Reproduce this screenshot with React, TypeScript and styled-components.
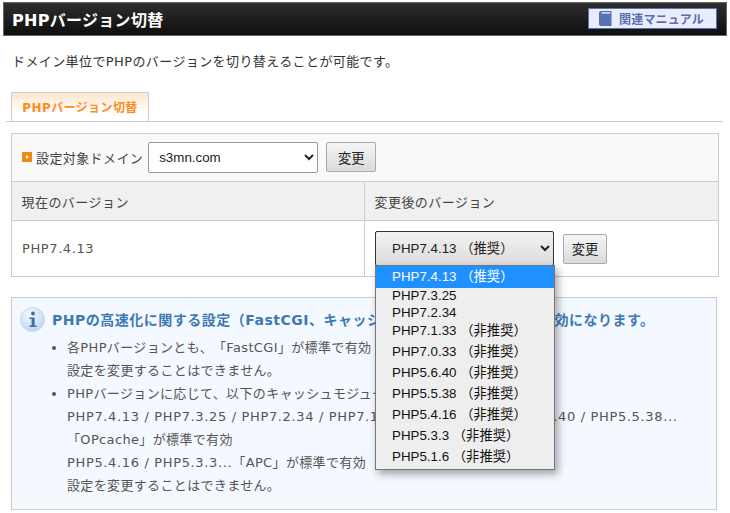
import * as React from 'react';
import styled, { createGlobalStyle } from 'styled-components';

const GlobalStyle = createGlobalStyle`
	html, body {
		margin: 0;
		padding: 0;
		background: #fff;
	}
	body {
		font-family: "DejaVu Sans", "Noto Sans CJK JP", sans-serif;
		font-size: 13px;
		color: #333;
		text-spacing-trim: space-all;
	}
`;

const CJK_UI = `"Liberation Sans", "Noto Sans CJK JP", sans-serif`;

const Page = styled.div`
	width: 730px;
	height: 513px;
	padding: 2px 3px 0;
	box-sizing: border-box;
	overflow: hidden;
`;

const Header = styled.header`
	display: flex;
	align-items: center;
	justify-content: space-between;
	height: 34px;
	box-sizing: border-box;
	padding: 0 9px 0 8px;
	border: 1px solid #666;
	background: linear-gradient(#2e2e2e, #0e0e0e);
`;

const Title = styled.h1`
	margin: 0;
	font-size: 16px;
	letter-spacing: 0.3px;
	font-weight: bold;
	color: #fff;
`;

const ManualLink = styled.a`
	display: flex;
	align-items: center;
	gap: 7px;
	width: 129px;
	height: 21px;
	box-sizing: border-box;
	padding-left: 10px;
	margin-bottom: 2px;
	background: #e9edfb;
	border: 1px solid #5a72b5;
	color: #5a6fae;
	font-size: 12px;
	letter-spacing: 0.2px;
	font-weight: bold;
`;

const Lead = styled.p`
	margin: 16px 0 0 9px;
	font-size: 13px;
	letter-spacing: 0.4px;
	line-height: 19px;
	color: #333;
`;

const TabBar = styled.div`
	margin: 21px 4px 0 3px;
	padding-left: 5px;
	border-bottom: 1px solid #ccc;
	height: 29px;
`;

const Tab = styled.div`
	width: 138px;
	height: 29px;
	box-sizing: border-box;
	padding-top: 1px;
	border: 1px solid #ccc;
	border-bottom: none;
	background: linear-gradient(#ffe6cc, #fff 70%);
	color: #ff8c1f;
	font-size: 12px;
	letter-spacing: 0.4px;
	font-weight: bold;
	line-height: 29px;
	text-align: center;
`;

const Table = styled.table`
	width: 708px;
	margin: 11px 0 0 8px;
	border-collapse: collapse;
	table-layout: fixed;

	td, th {
		border: 1px solid #ccc;
		padding: 0 10px;
		text-align: left;
		box-sizing: border-box;
	}
`;

const LeftColumn = styled.col`
	width: 353px;
`;

const DomainCell = styled.td`
	height: 48px;
	background: #f9f9f9;
`;

const DomainRow = styled.div`
	display: flex;
	align-items: center;
	gap: 8px;
	margin-top: -1px;
	font-size: 13px;
	color: #444;
`;

const DomainLabel = styled.span`
	display: flex;
	align-items: center;
	gap: 4px;
	margin-right: -3px;
	letter-spacing: 0.4px;
`;

const Marker = styled.span`
	display: flex;
	align-items: center;
	justify-content: center;
	width: 10px;
	height: 10px;
	background: #f08a16;

	&::after {
		content: '';
		border-left: 3px solid #fff;
		border-top: 2px solid transparent;
		border-bottom: 2px solid transparent;
	}
`;

const HeadCell = styled.th`
	height: 39px;
	background: #f0f0f0;
	font-size: 13px;
	letter-spacing: 0.45px;
	font-weight: normal;
	color: #444;

	&& {
		padding-left: 9.5px;
	}
`;

const ValueCell = styled.td`
	height: 56px;
	font-size: 13px;
	letter-spacing: 0.6px;
	color: #555;
`;

const NativeSelect = styled.select<{ $width: number; $open?: boolean }>`
	width: ${(p) => p.$width}px;
	height: ${(p) => (p.$open ? 35 : 31)}px;
	padding-left: ${(p) => (p.$open ? 12 : 6)}px;
	border-radius: 2px;
	box-sizing: border-box;
	font-family: ${CJK_UI};
	font-size: 13.33px;
	color: #222;
	border: 1px solid ${(p) => (p.$open ? '#333' : '#999')};
	background-color: ${(p) => (p.$open ? '#e6e6e6' : '#fff')};
	background-image: ${(p) => (p.$open ? 'linear-gradient(#f2f2f2, #dcdcdc)' : 'none')};
`;

const ChangeButton = styled.button<{ $width: number }>`
	width: ${(p) => p.$width}px;
	height: 30px;
	border: 1px solid #aaa;
	border-radius: 2px;
	background: linear-gradient(#f6f6f6, #dadada);
	font-family: ${CJK_UI};
	font-size: 13.33px;
	color: #222;
	padding: 0;
`;

const SelectWrap = styled.div`
	position: relative;
	display: flex;
	align-items: center;
	gap: 9px;
`;

const OptionList = styled.ul`
	position: absolute;
	z-index: 5;
	top: 34px;
	left: 0;
	width: 180px;
	height: 205px;
	box-sizing: border-box;
	margin: 0;
	padding: 0;
	list-style: none;
	background: #eee;
	border: 1px solid #777;
	box-shadow: 3px 4px 8px rgba(0, 0, 0, 0.35);
	font-family: ${CJK_UI};
	font-size: 13.33px;
	letter-spacing: 0;
	color: #111;
`;

const Option = styled.li<{ $active?: boolean; $height: number }>`
	height: ${(p) => p.$height}px;
	line-height: ${(p) => p.$height}px;
	padding-left: 16px;
	white-space: nowrap;
	background: ${(p) => (p.$active ? '#1e90ff' : 'transparent')};
	color: ${(p) => (p.$active ? '#fff' : '#111')};
`;

const InfoBox = styled.section`
	width: 706px;
	height: 213px;
	box-sizing: border-box;
	margin: 20px 0 0 8px;
	padding: 8px;
	background: #f4f8ff;
	border: 1px solid #ccc;
`;

const InfoHead = styled.div`
	display: flex;
	align-items: center;
	gap: 7px;
	height: 26px;
`;

const InfoTitle = styled.h2`
	margin: 0;
	font-size: 14px;
	letter-spacing: 0.5px;
	font-weight: bold;
	color: #3d78b4;
	white-space: nowrap;
`;

const InfoList = styled.ul`
	margin: 4px 0 0;
	padding: 0 0 0 47px;
	font-size: 13px;
	letter-spacing: 0.35px;
	line-height: 23px;
	color: #555;
`;

const InfoItem = styled.li`
	white-space: nowrap;
`;

const VersionLine = styled.span`
	letter-spacing: 0.65px;
`;

const versions: { label: string; height: number; active?: boolean }[] = [
	{ label: 'PHP7.4.13 （推奨）', height: 22, active: true },
	{ label: 'PHP7.3.25', height: 16 },
	{ label: 'PHP7.2.34', height: 17 },
	{ label: 'PHP7.1.33 （非推奨）', height: 20 },
	{ label: 'PHP7.0.33 （非推奨）', height: 21 },
	{ label: 'PHP5.6.40 （非推奨）', height: 21 },
	{ label: 'PHP5.5.38 （非推奨）', height: 21 },
	{ label: 'PHP5.4.16 （非推奨）', height: 21 },
	{ label: 'PHP5.3.3 （非推奨）', height: 21 },
	{ label: 'PHP5.1.6 （非推奨）', height: 21 },
];

const BookIcon = () => (
	<svg width="13" height="15" viewBox="0 0 13 15">
		<path d="M2 0H12.5V15H2C.9 15 0 14.1 0 13V2C0 .9.9 0 2 0Z" fill="#5a72b5" />
		<rect x="2.5" y="1.2" width="8.8" height="1.4" fill="#e9edfb" />
	</svg>
);

const InfoIcon = () => (
	<svg width="25" height="25" viewBox="0 0 25 25">
		<defs>
			<radialGradient id="infoBg" cx="0.4" cy="0.3" r="0.8">
				<stop offset="0" stopColor="#f4f8fe" />
				<stop offset="1" stopColor="#bcd3ee" />
			</radialGradient>
		</defs>
		<circle cx="12.5" cy="12.5" r="12" fill="url(#infoBg)" stroke="#c5d8ef" />
		<circle cx="13" cy="6.5" r="1.9" fill="#3d6ea8" />
		<path d="M9.5 10.5H14.6V18.6H16.6V20H9.5V18.6H11.6V11.9H9.5Z" fill="#3d6ea8" />
	</svg>
);

export default function App() {
	return (
		<Page>
			<GlobalStyle />
			<Header>
				<Title>PHPバージョン切替</Title>
				<ManualLink>
					<BookIcon />
					関連マニュアル
				</ManualLink>
			</Header>
			<Lead>ドメイン単位でPHPのバージョンを切り替えることが可能です。</Lead>
			<TabBar>
				<Tab>PHPバージョン切替</Tab>
			</TabBar>
			<Table>
				<colgroup>
					<LeftColumn />
					<col />
				</colgroup>
				<tbody>
					<tr>
						<DomainCell colSpan={2}>
							<DomainRow>
								<DomainLabel>
									<Marker />
									設定対象ドメイン
								</DomainLabel>
								<NativeSelect $width={170} defaultValue="s3mn.com">
									<option>s3mn.com</option>
								</NativeSelect>
								<ChangeButton $width={50}>変更</ChangeButton>
							</DomainRow>
						</DomainCell>
					</tr>
					<tr>
						<HeadCell>現在のバージョン</HeadCell>
						<HeadCell>変更後のバージョン</HeadCell>
					</tr>
					<tr>
						<ValueCell>PHP7.4.13</ValueCell>
						<ValueCell>
							<SelectWrap>
								<NativeSelect $width={179} $open defaultValue={versions[0].label}>
									{versions.map((v) => (
										<option key={v.label}>{v.label}</option>
									))}
								</NativeSelect>
								<ChangeButton $width={44}>変更</ChangeButton>
								<OptionList>
									{versions.map((v) => (
										<Option key={v.label} $active={v.active} $height={v.height}>
											{v.label}
										</Option>
									))}
								</OptionList>
							</SelectWrap>
						</ValueCell>
					</tr>
				</tbody>
			</Table>
			<InfoBox>
				<InfoHead>
					<InfoIcon />
					<InfoTitle>PHPの高速化に関する設定（FastCGI、キャッシュモジュール）が標準で有効になります。</InfoTitle>
				</InfoHead>
				<InfoList>
					<InfoItem>
						各PHPバージョンとも、「FastCGI」が標準で有効
						<br />
						設定を変更することはできません。
					</InfoItem>
					<InfoItem>
						PHPバージョンに応じて、以下のキャッシュモジュールが標準で有効
						<br />
						<VersionLine>PHP7.4.13 / PHP7.3.25 / PHP7.2.34 / PHP7.1.33 / PHP7.0.33 / PHP5.6.40 / PHP5.5.38...</VersionLine>
						<br />
						「OPcache」が標準で有効
						<br />
						<VersionLine>PHP5.4.16 / PHP5.3.3...</VersionLine>「APC」が標準で有効
						<br />
						設定を変更することはできません。
					</InfoItem>
				</InfoList>
			</InfoBox>
		</Page>
	);
}
